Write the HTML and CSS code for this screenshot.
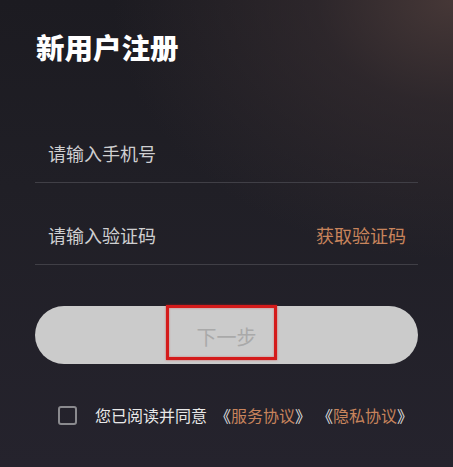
FILE: index.html
```html
<!DOCTYPE html>
<html lang="zh-CN">
<head>
<meta charset="utf-8">
<title>新用户注册</title>
<link rel="stylesheet" href="styles.css">
</head>
<body>
<main class="page">
  <h1 class="title">新用户注册</h1>
  <div class="field">
    <span class="placeholder">请输入手机号</span>
  </div>
  <div class="field">
    <span class="placeholder">请输入验证码</span>
    <span class="get-code">获取验证码</span>
  </div>
  <div class="btn">
    <span class="btn-text">下一步</span>
    <span class="highlight"></span>
  </div>
  <div class="agree">
    <span class="checkbox"></span>
    <span class="agree-text">您已阅读并同意</span>
    <span class="doc doc-first">《<span class="link">服务协议</span>》</span>
    <span class="doc doc-second">《<span class="link">隐私协议</span>》</span>
  </div>
</main>
</body>
</html>
```

FILE: styles.css
```css
* { box-sizing: border-box; }
html, body {
  margin: 0;
  height: 100%;
}
body {
  width: 453px;
  height: 467px;
  overflow: hidden;
  font-family: "Noto Sans CJK SC", "Noto Sans", sans-serif;
  background:
    radial-gradient(ellipse 340px 260px at 100% 0%, rgba(72, 57, 56, 0.95) 0%, rgba(56, 46, 49, 0.6) 40%, rgba(40, 35, 40, 0) 100%),
    linear-gradient(180deg, #1c1b21 0%, #201f26 40%, #25232d 100%);
}
.page {
  padding: 27px 35px 0 35px;
}
.title {
  margin: 0;
  font-size: 28.5px;
  line-height: 40px;
  font-weight: 900;
  color: #ffffff;
  padding-left: 1px;
}
.field {
  display: flex;
  justify-content: space-between;
  align-items: center;
  height: 82px;
  padding: 40px 12px 17px 13px;
  border-bottom: 1px solid #403f46;
  font-size: 18px;
  line-height: 24px;
}
.field:first-of-type { margin-top: 34px; }
.placeholder { color: #cfcfd1; }
.get-code { color: #c8845c; }
.btn {
  position: relative;
  margin-top: 41px;
  height: 58px;
  border-radius: 29px;
  background: #cbcbcb;
  display: flex;
  align-items: center;
  justify-content: center;
}
.btn-text {
  font-size: 20px;
  color: #a9a9a9;
  padding-top: 2px;
}
.highlight {
  position: absolute;
  left: 131px;
  top: -1px;
  width: 111px;
  height: 55px;
  border: 3px solid #d41b1b;
  box-shadow: 0 0 2px rgba(212, 27, 27, 0.6), inset 0 0 2px rgba(212, 27, 27, 0.5);
}
.agree {
  display: flex;
  align-items: center;
  margin-top: 39px;
  padding-left: 23px;
  height: 24px;
  font-size: 16px;
  line-height: 24px;
  color: #e8e8e8;
}
.checkbox {
  width: 19px;
  height: 19px;
  border: 2px solid #8a8a8e;
  border-radius: 3px;
  margin-right: 18px;
}
.doc { color: #e0e0e0; }
.doc-first { margin-left: 8px; }
.doc-second { margin-left: 6px; }
.link { color: #c8845c; }
```
